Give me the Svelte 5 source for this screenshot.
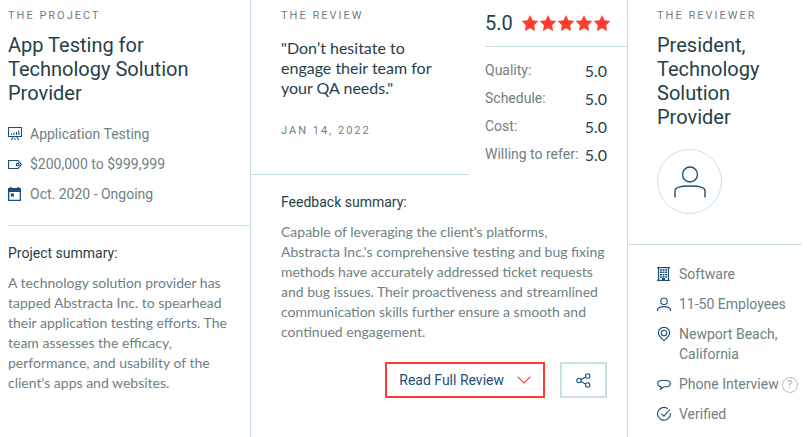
<script lang="ts">
  const projectFacts = [
    { icon: "board", text: "Application Testing" },
    { icon: "tag", text: "$200,000 to $999,999" },
    { icon: "calendar", text: "Oct. 2020 - Ongoing" },
  ];

  const scores = [
    { label: "Quality", value: 5 },
    { label: "Schedule", value: 5 },
    { label: "Cost", value: 5 },
    { label: "Willing to refer", value: 5 },
  ];

  const reviewerFacts = [
    { icon: "building", text: "Software" },
    { icon: "person", text: "11-50 Employees" },
    { icon: "pin", text: "Newport Beach, California" },
    { icon: "bubble", text: "Phone Interview", help: true },
    { icon: "check", text: "Verified" },
  ];
</script>

{#snippet icon(name: string)}
  <svg class="icon" viewBox="0 0 14 14" aria-hidden="true">
    {#if name === "board"}
      <path d="M.5.5h13v9H.5z" />
      <path d="M3.500 8V6.500M6 8V5.500M8.500 8V5M10.800 8V3.500M5 10l-1.500 3M9 10l1.500 3M6 12h2" />
    {:else if name === "tag"}
      <path d="M.6 3.500h9.400l3.400 3.800L10 11.500H.6z" />
      <circle cx="9.700" cy="7.400" r="1.300" />
    {:else if name === "calendar"}
      <path class="solid" d="M0 1h2V0h1.500v1h6V0H11v1h2v13H0zM1.300 5v7.700h10.400V5z" fill-rule="evenodd" />
      <path class="solid" d="M2.700 6.500h3.200v3H2.700z" />
    {:else if name === "building"}
      <path d="M1.500.7h10v12.600h-10zM0 .6h13M0 13.400h13" />
      <path class="windows" d="M3.800 2.300v8.400M6.500 2.300v8.400M9.200 2.300v8.400" />
      <path class="solid" d="M5 11h3v2.500H5z" />
    {:else if name === "person"}
      <circle cx="7" cy="4.300" r="3.300" />
      <path d="M.6 14v-2.300C2 10.200 4.500 9.600 7 9.600s5 .6 6.400 2.100V14" />
    {:else if name === "pin"}
      <path d="M7 13.600C4.800 11.200 1.300 8.800 1.300 5.900a5.700 5.500 0 0 1 11.400 0c0 2.900-3.500 5.300-5.700 7.700z" />
      <circle cx="7" cy="6" r="2.800" />
    {:else if name === "bubble"}
      <path d="M4.200 9.800C2 9.400.6 8.200.6 6.600c0-1.900 2-3.100 4.400-3.100h4c2.400 0 4.400 1.200 4.400 3.100S11.400 9.700 9 9.700H7l-3.500 2.600z" />
    {:else if name === "check"}
      <path d="M10.800 1.700A6.400 6.400 0 1 0 13.300 6" />
      <path d="M4.300 6.700l2.600 2.500 6-6.700" />
    {/if}
  </svg>
{/snippet}

<article class="review">
  <section class="project">
    <div class="top">
      <h3 class="label">The project</h3>
      <h2>App Testing for Technology Solution Provider</h2>
      <ul class="facts">
        {#each projectFacts as fact}
          <li>{@render icon(fact.icon)}<span>{fact.text}</span></li>
        {/each}
      </ul>
    </div>
    <div class="summary">
      <h4>Project summary:</h4>
      <p>
        A technology solution provider has tapped Abstracta Inc. to spearhead their
        application testing efforts. The team assesses the efficacy, performance, and
        usability of the client's apps and websites.
      </p>
    </div>
  </section>

  <section class="feedback">
    <div class="head">
      <div class="quote">
        <h3 class="label">The review</h3>
        <blockquote>"Don’t hesitate to engage their team for your QA needs."</blockquote>
        <time class="label" datetime="2022-01-14">Jan 14, 2022</time>
      </div>
      <div class="rating">
        <div class="total">
          <span>5.0</span>
          <div class="stars" role="img" aria-label="5 out of 5 stars">
            {#each Array(5) as _}
              <svg viewBox="0 0 18 18">
                <path d="M9 1l2.500 5.300 5.800.8-4.200 4.100 1 5.800L9 14.200 3.900 17l1-5.800L.7 7.100l5.800-.8z" />
              </svg>
            {/each}
          </div>
        </div>
        <dl>
          {#each scores as score}
            <div>
              <dt>{score.label}:</dt>
              <dd>{score.value.toFixed(1)}</dd>
            </div>
          {/each}
        </dl>
      </div>
    </div>
    <div class="summary">
      <h4>Feedback summary:</h4>
      <p>
        Capable of leveraging the client's platforms, Abstracta Inc.'s comprehensive
        testing and bug fixing methods have accurately addressed ticket requests and bug
        issues. Their proactiveness and streamlined communication skills further ensure a
        smooth and continued engagement.
      </p>
      <div class="actions">
        <button class="read">
          Read Full Review
          <svg viewBox="0 0 14 8" aria-hidden="true"><path d="M.5.7L7 7 13.500.7" /></svg>
        </button>
        <button class="share" aria-label="Share">
          <svg viewBox="0 0 15 15" aria-hidden="true">
            <circle cx="3" cy="7.500" r="2.200" />
            <circle cx="11.700" cy="3" r="2.200" />
            <circle cx="11.700" cy="12" r="2.200" />
            <path d="M5 6.500l4.700-2.500M5 8.500l4.700 2.500" />
          </svg>
        </button>
      </div>
    </div>
  </section>

  <section class="reviewer">
    <div class="top">
      <h3 class="label">The reviewer</h3>
      <h2>President, Technology Solution Provider</h2>
      <div class="avatar">
        <svg viewBox="0 0 32 32" aria-hidden="true">
          <circle cx="16" cy="8.500" r="7.500" />
          <path d="M1 31.500v-6.700C1 21.500 8 20 16 20s15 1.500 15 4.800v6.700" />
        </svg>
      </div>
    </div>
    <ul class="facts">
      {#each reviewerFacts as fact}
        <li>
          {@render icon(fact.icon)}
          <span>{fact.text}</span>
          {#if fact.help}
            <button class="help" aria-label="About this interview">?</button>
          {/if}
        </li>
      {/each}
    </ul>
  </section>
</article>

<style>
  :global(body) {
    margin: 0;
    background: #fff;
  }

  .review {
    --dark: #263f49;
    --grey: #6f7f82;
    --blue: #1b4f7b;
    --red: #ff3d2e;
    --line: #c8e0e6;

    display: grid;
    grid-template-columns: 242fr 377fr 175fr;
    min-height: 100vh;
    padding: 0 5px 0 8px;
    box-sizing: border-box;
    font: 14px/20px Roboto, sans-serif;
    color: var(--grey);
  }

  h2,
  h3,
  h4,
  p,
  ul,
  dl,
  dd,
  blockquote {
    margin: 0;
    padding: 0;
    font-weight: 400;
  }

  .label {
    font-size: 11px;
    line-height: 20px;
    letter-spacing: 2px;
    text-transform: uppercase;
  }

  h2 {
    margin-top: 7px;
    font-size: 20px;
    line-height: 24px;
    color: var(--dark);
  }

  h4 {
    font-size: 14px;
    color: var(--dark);
  }

  p {
    margin-top: 10px;
    font-family: Lato, sans-serif;
  }

  .top {
    padding-top: 6px;
    border-bottom: 1px solid var(--line);
  }

  .project .top {
    padding-bottom: 21px;
  }

  .project h2 {
    margin-bottom: 19px;
    padding-right: 40px;
  }

  .project .summary {
    padding: 17px 20px 0 0;
  }

  .facts {
    display: flex;
    flex-direction: column;
    gap: 10px;
    list-style: none;
  }

  .facts li {
    display: flex;
    gap: 8px;
  }

  .icon {
    flex: none;
    width: 14px;
    height: 14px;
    margin-top: 3px;
  }

  svg {
    fill: none;
    stroke: var(--blue);
    stroke-width: 1.1;
  }

  .solid {
    fill: var(--blue);
    stroke: none;
  }

  .windows {
    stroke-width: 2;
    stroke-dasharray: 1.5 0.8;
  }

  .feedback {
    border-left: 1px solid var(--line);
  }

  .head {
    display: flex;
    gap: 16px;
  }

  .quote {
    flex: 1;
    padding: 6px 20px 33px 30px;
    border-bottom: 1px solid var(--line);
  }

  blockquote {
    margin: 12px 0 23px;
    font: 16px/20px Lato, sans-serif;
    color: var(--dark);
  }

  time {
    display: block;
  }

  .rating {
    width: 142px;
  }

  .total {
    display: flex;
    align-items: center;
    gap: 8px;
    height: 46px;
    border-bottom: 1px solid var(--line);
    font-size: 20px;
    color: var(--dark);
  }

  .stars {
    display: flex;
  }

  .stars svg {
    width: 18px;
    height: 18px;
    fill: var(--red);
    stroke: none;
  }

  dl {
    padding: 13px 20px 0 0;
  }

  dl div {
    display: flex;
    justify-content: space-between;
    height: 28px;
  }

  dt {
    white-space: nowrap;
  }

  dd {
    font: 16px/22px Lato, sans-serif;
    color: var(--dark);
  }

  .feedback .summary {
    padding: 17px 20px 0 30px;
  }

  .actions {
    display: flex;
    justify-content: flex-end;
    gap: 15px;
    margin-top: 20px;
  }

  button {
    display: flex;
    align-items: center;
    justify-content: center;
    padding: 0;
    background: #fff;
    font: inherit;
    cursor: pointer;
  }

  .read {
    gap: 13px;
    height: 36px;
    padding: 0 12px;
    border: 2px solid var(--red);
    color: var(--blue);
  }

  .read svg {
    width: 14px;
    height: 8px;
    stroke: var(--red);
  }

  .share {
    width: 47px;
    height: 36px;
    border: 2px solid var(--line);
  }

  .share svg {
    width: 15px;
    height: 15px;
  }

  .reviewer {
    border-left: 1px solid var(--line);
  }

  .reviewer .top {
    padding-left: 29px;
    padding-bottom: 30px;
  }

  .reviewer h2 {
    padding-right: 20px;
  }

  .avatar {
    display: flex;
    align-items: center;
    justify-content: center;
    width: 63px;
    height: 63px;
    margin-top: 20px;
    border: 1px solid var(--line);
    border-radius: 50%;
  }

  .avatar svg {
    width: 32px;
    height: 32px;
    stroke-width: 1.4;
  }

  .reviewer .facts {
    padding: 19px 0 0 29px;
  }

  .help {
    flex: none;
    width: 16px;
    height: 16px;
    margin: 3px 0 0 -5px;
    border: 1px solid #b4bdbf;
    border-radius: 50%;
    font-size: 11px;
    line-height: 14px;
    color: #a4aeb0;
  }
</style>
